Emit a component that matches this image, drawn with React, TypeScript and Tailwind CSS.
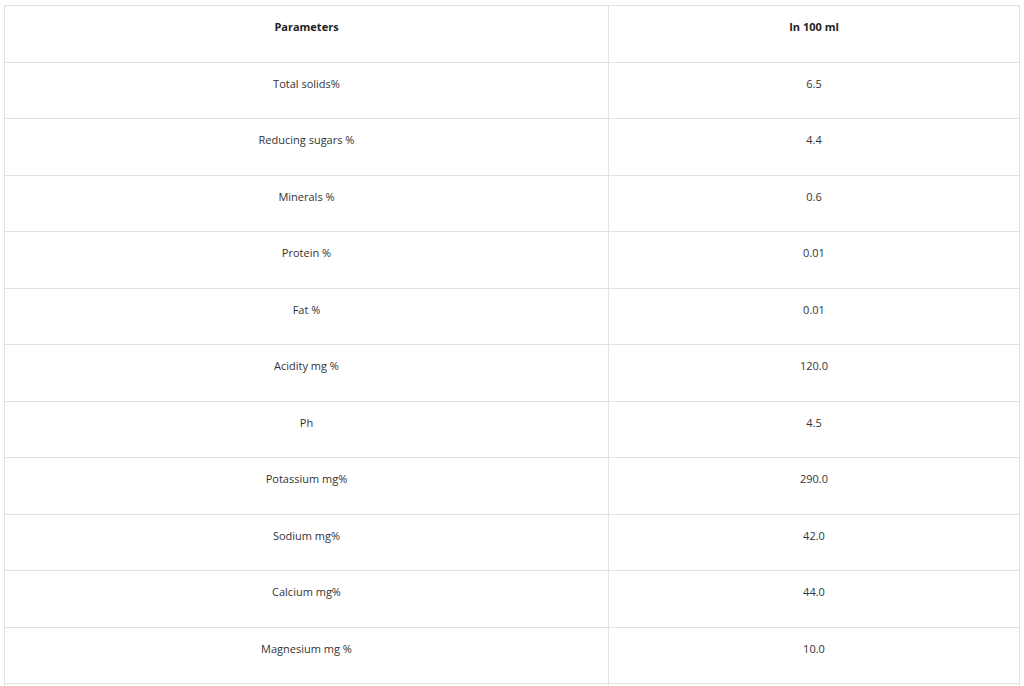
import React from 'react';

const rows: [string, string][] = [
  ['Total solids%', '6.5'],
  ['Reducing sugars %', '4.4'],
  ['Minerals %', '0.6'],
  ['Protein %', '0.01'],
  ['Fat %', '0.01'],
  ['Acidity mg %', '120.0'],
  ['Ph', '4.5'],
  ['Potassium mg%', '290.0'],
  ['Sodium mg%', '42.0'],
  ['Calcium mg%', '44.0'],
  ['Magnesium mg %', '10.0'],
];

const cell = 'border border-[#e2e2e2] pt-[10px] pb-[24.5px] text-center leading-[21px]';

export default function App() {
  return (
    <div className="h-[686px] overflow-hidden bg-white pl-1 pt-[5px]">
      <table className="w-[1016px] table-fixed border-collapse text-[11px] text-[#333]">
        <colgroup>
          <col className="w-[604px]" />
          <col />
        </colgroup>
        <thead>
          <tr>
            <th className={`${cell} font-['Open_Sans',sans-serif] font-bold text-[#222]`}>Parameters</th>
            <th className={`${cell} font-['Open_Sans',sans-serif] font-bold text-[#222]`}>In 100 ml</th>
          </tr>
        </thead>
        <tbody>
          {rows.map(([name, value]) => (
            <tr key={name}>
              <td className={`${cell} font-['Open_Sans',sans-serif]`}>{name}</td>
              <td className={`${cell} font-['Open_Sans',sans-serif]`}>{value}</td>
            </tr>
          ))}
          {/* next row continues below the fold */}
          <tr>
            <td className={cell}>&nbsp;</td>
            <td className={cell}>&nbsp;</td>
          </tr>
        </tbody>
      </table>
    </div>
  );
}
